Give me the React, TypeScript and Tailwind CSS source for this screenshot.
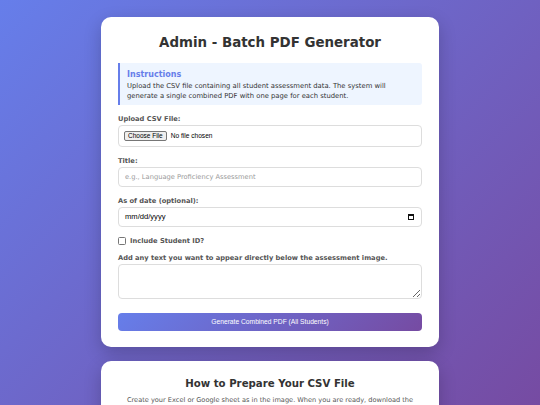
import React from 'react';

const Label: React.FC<{ children: React.ReactNode }> = ({ children }) => (
  <label className="block text-[6.7px] leading-[10px] font-bold text-[#555] mb-px">{children}</label>
);

const CalendarIcon: React.FC = () => (
  <svg width="6" height="6" viewBox="0 0 6 6" className="shrink-0">
    <rect x="0.5" y="0.5" width="5" height="5" fill="none" stroke="#111" strokeWidth="1" />
    <rect x="0.5" y="0.5" width="5" height="1.5" fill="#111" />
  </svg>
);

const App: React.FC = () => {
  return (
    <div
      className="min-h-screen bg-fixed bg-[linear-gradient(135deg,#667eea_0%,#764ba2_100%)] pt-[17px] pb-5 px-[101px]"
      style={{ fontFamily: '"DejaVu Sans", Verdana, sans-serif' }}
    >
      <div className="bg-white rounded-[10px] shadow-[0_6px_18px_rgba(0,0,0,0.2)] px-[17px] pt-[17px] pb-[16px]">
        <h1 className="text-center text-[13.4px] leading-[18px] font-bold text-[#333] mb-[11px]">
          Admin - Batch PDF Generator
        </h1>

        <div className="bg-[#eef5ff] border-l-2 border-[#667eea] rounded-r-[3px] pl-[7px] pr-2 pt-[7px] pb-[4px] mb-[9px]">
          <h3 className="text-[8px] leading-[10px] font-bold text-[#667eea] mb-[2px]">Instructions</h3>
          <p className="text-[6.8px] leading-[9.6px] text-[#333]">
            Upload the CSV file containing all student assessment data. The system will
            <br />
            generate a single combined PDF with one page for each student.
          </p>
        </div>

        <div className="mb-[9px]">
          <Label>Upload CSV File:</Label>
          <div className="h-[22px] border border-[#ddd] rounded-[4px] flex items-center px-[5px] gap-[4px]" style={{ fontFamily: '"Liberation Sans", Arial, sans-serif' }}>
            <span className="h-[10px] px-[3px] flex items-center bg-[#efefef] border border-[#767676] rounded-[2px] text-[6.5px] text-black">
              Choose File
            </span>
            <span className="text-[6.6px] text-black">No file chosen</span>
          </div>
        </div>

        <div className="mb-[9px]">
          <Label>Title:</Label>
          <input
            type="text"
            placeholder="e.g., Language Proficiency Assessment"
            className="block w-full h-[20px] border border-[#ddd] rounded-[4px] px-[6px] text-[6.7px] text-[#333] placeholder:text-[#999] outline-none"
          />
        </div>

        <div className="mb-[9px]">
          <Label>As of date (optional):</Label>
          <div
            className="h-[20px] border border-[#ddd] rounded-[4px] pl-[6px] pr-[7px] flex items-center justify-between text-[7.6px] text-black"
            style={{ fontFamily: '"Liberation Sans", Arial, sans-serif' }}
          >
            <span>mm/dd/yyyy</span>
            <CalendarIcon />
          </div>
        </div>

        <div className="flex items-center h-[10px] mb-[7px]">
          <input type="checkbox" className="appearance-none w-[8px] h-[8px] border border-[#767676] rounded-[1.5px] bg-white mr-[4px]" />
          <span className="text-[6.7px] font-bold text-[#555]">Include Student ID?</span>
        </div>

        <Label>Add any text you want to appear directly below the assessment image.</Label>
        <textarea className="block w-full h-[35px] border border-[#ddd] rounded-[4px] px-[6px] py-1 text-[6.5px] outline-none resize-y mb-[14px]" />

        <button
          className="block w-full h-[18px] rounded-[4px] bg-[linear-gradient(135deg,#667eea_0%,#764ba2_100%)] text-white text-[6.7px]"
          style={{ fontFamily: '"Liberation Sans", Arial, sans-serif' }}
        >
          Generate Combined PDF (All Students)
        </button>
      </div>

      <div className="mt-[14px] bg-white rounded-[10px] shadow-[0_6px_18px_rgba(0,0,0,0.2)] px-[17px] pt-[16px] pb-[16px]">
        <h2 className="text-center text-[10.2px] leading-[13px] font-bold text-[#333] mb-[5px]">
          How to Prepare Your CSV File
        </h2>
        <p className="text-center text-[6.6px] leading-[10px] text-[#555]">
          Create your Excel or Google sheet as in the image. When you are ready, download the
          <br />
          sheet as a CSV file and upload it above.
        </p>
      </div>
    </div>
  );
};

export default App;
